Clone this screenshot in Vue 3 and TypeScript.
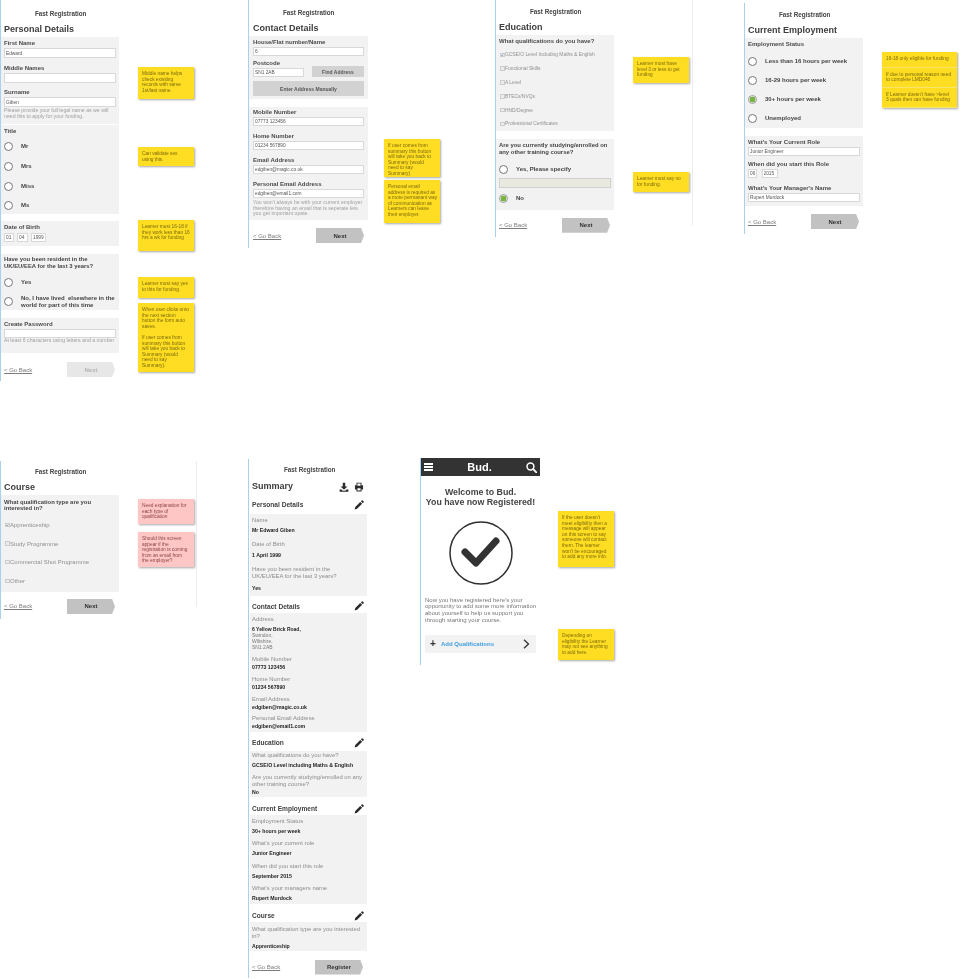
<script setup lang="ts">
type Row = {
  k: string
  h: number
  text?: string
  pt?: number
  on?: boolean
  values?: { v: string; w: number; gap?: number }[]
  btn?: string
}
type Panel = { mt: number; rows: Row[] }
type Frame = {
  name: string
  left: number
  top: number
  height: number
  width: number
  pad: number
  inset: number
  p: number
  mb: number
  title: string
  panels: Panel[]
  footMt: number
  next: string
  disabled?: boolean
  rightLine?: number
  icons?: boolean
}

const L = (text: string, h: number): Row => ({ k: 'label', text, h })
const I = (v: string, h = 9): Row => ({ k: 'inputs', h, values: [{ v, w: 0 }] })
const G = (h: number): Row => ({ k: 'gap', h })
const A = (text: string, h: number, pt = 0): Row => ({ k: 'ask', text, h, pt })
const H = (text: string, h: number, pt = 0): Row => ({ k: 'help', text, h, pt })
const R = (text: string, h: number, on = false): Row => ({ k: 'radio', text, h, on })
const C = (text: string, h: number, on = false): Row => ({ k: 'check', text, h, on })
const S = (text: string, h: number, pt = 0): Row => ({ k: 'sumlabel', text, h, pt })
const V = (text: string, h = 8, pt = 0): Row => ({ k: 'sumval', text, h, pt })
const T = (text: string, h: number, pt: number): Row => ({ k: 'sechead', text, h, pt })

const frames: Frame[] = [
  {
    name: 'personal', left: 0, top: 0, height: 381, width: 118, pad: 3, inset: 0, p: 9, mb: 3,
    title: 'Personal Details', footMt: 9, next: 'Next', disabled: true,
    panels: [
      { mt: 1, rows: [
        L('First Name', 11), I('Edward', 10), L('Middle Names', 15), I('', 10), L('Surname', 14), I('Giben', 10),
        H('Please provide your full legal name as we will\nneed this to apply for your funding.', 17, 1),
      ] },
      { mt: 1, rows: [L('Title', 11), R('Mr', 20), R('Mrs', 20), R('Miss', 20), R('Ms', 18)] },
      { mt: 7, rows: [
        L('Date of Birth', 11),
        { k: 'inputs', h: 14, pt: 1, values: [{ v: '01', w: 10, gap: 3 }, { v: '04', w: 11, gap: 3 }, { v: '1999', w: 15 }] },
      ] },
      { mt: 8, rows: [
        A('Have you been resident in the\nUK/EU/EEA for the last 3 years?', 17, 2),
        R('Yes', 22),
        R('No, I have lived  elsewhere in the\nworld for part of this time', 17),
      ] },
      { mt: 8, rows: [L('Create Password', 10.5), I('', 9.5), H('At least 6 characters using letters and a number', 15)] },
    ],
  },
  {
    name: 'contact', left: 248, top: 0, height: 248, width: 119, pad: 4, inset: 0, p: 7.5, mb: 3.5,
    title: 'Contact Details', footMt: 8, next: 'Next',
    panels: [
      { mt: 1, rows: [
        L('House/Flat number/Name', 11), I('6'),
        { k: 'postcode', h: 21, text: 'SN1 2AB', btn: 'Find Address' },
        { k: 'wide', h: 19, pt: 4, btn: 'Enter Address Manually' },
        G(3),
      ] },
      { mt: 8, rows: [
        L('Mobile Number', 10), I('07773 123456'), L('Home Number', 15), I('01234 567890'),
        L('Email Address', 15), I('edgiben@magic.co.uk'), L('Personal Email Address', 15), I('edgiben@email1.com'),
        H("You won't always be with your current employer\ntherefore having an email that is seperate lets\nyou get important upate.", 22, 2),
      ] },
    ],
  },
  {
    name: 'education', left: 495, top: 0, height: 237, width: 118, pad: 3, inset: 0, p: 7, mb: 3,
    title: 'Education', footMt: 8, next: 'Next', rightLine: 196,
    panels: [
      { mt: 1, rows: [
        L('What qualifications do you have?', 11), G(2),
        C('GCSE/O Level Including Maths & English', 13.8, true), C('Functional Skills', 13.8), C('A Level', 13.8),
        C('BTECs/NVQs', 13.8), C('HND/Degree', 13.8), C('Professional Certificates', 13.8),
      ] },
      { mt: 8, rows: [
        A('Are you currently studying/enrolled on\nany other training course?', 18, 3.5),
        G(5), R('Yes, Please specify', 16), { k: 'field', h: 10 }, R('No', 22, true),
      ] },
    ],
  },
  {
    name: 'employment', left: 744, top: 3, height: 231, width: 118, pad: 3, inset: 0, p: 7, mb: 3,
    title: 'Current Employment', footMt: 8, next: 'Next',
    panels: [
      { mt: 1, rows: [
        L('Employment Status', 11), G(2.5),
        R('Less than 16 hours per week', 19), R('16-29 hours per week', 19),
        R('30+ hours per week', 19, true), R('Unemployed', 19),
      ] },
      { mt: 8, rows: [
        L("What's Your Current Role", 11.5), I('Junior Engineer'), L('When did you start this Role', 13),
        { k: 'inputs', h: 8, values: [{ v: '09', w: 9, gap: 4.5 }, { v: '2015', w: 16 }] },
        L("What's Your Manager's Name", 16), I('Rupert Murdock'), G(4),
      ] },
    ],
  },
  {
    name: 'course', left: 0, top: 461, height: 158, width: 118, pad: 3, inset: 0, p: 5.5, mb: 3.5,
    title: 'Course', footMt: 7, next: 'Next', rightLine: 195,
    panels: [
      { mt: 1, rows: [
        A('What qualification type are you\ninterested in?', 19, 3.5), G(1.5),
        { ...C('Apprenticeship', 18.7, true), k: 'bigcheck' }, { ...C('Study Programme', 18.7), k: 'bigcheck' },
        { ...C('Commercial Shot Programme', 18.7), k: 'bigcheck' }, { ...C('Other', 18.7), k: 'bigcheck' }, G(1.7),
      ] },
    ],
  },
  {
    name: 'summary', left: 248, top: 459, height: 519, width: 117, pad: 2, inset: 1, p: 6, mb: 4,
    title: 'Summary', footMt: 9, next: 'Register', icons: true,
    panels: [
      { mt: 0, rows: [T('Personal Details', 21, 2)] },
      { mt: 0, rows: [
        S('Name', 12), V('Mr Edward Giben'), G(4), S('Date of Birth', 13), V('1 April 1999'), G(5),
        S('Have you been resident in the\nUK/EU/EEA for the last 3 years?', 16, 1.5), G(4), V('Yes'), G(4),
      ] },
      { mt: 0, rows: [T('Contact Details', 17, 3)] },
      { mt: 0, rows: [
        S('Address', 13),
        { k: 'address', h: 24 },
        G(5.5), S('Mobile Number', 7), V('07773 123456'), G(5.5), S('Home Number', 7), V('01234 567890'),
        G(5), S('Email Address', 7), V('edgiben@magic.co.uk'), G(4), S('Personal Email Address', 7), V('edgiben@email1.com'), G(1.5),
      ] },
      { mt: 0, rows: [T('Education', 19, 3)] },
      { mt: 0, rows: [
        S('What qualifications do you have?', 10), V('GCSE/O Level including Maths & English'), G(5.5),
        S('Are you currently studying/enrolled on any\nother training course?', 14), V('No'), G(0.5),
      ] },
      { mt: 0, rows: [T('Current Employment', 18, 6)] },
      { mt: 0, rows: [
        S('Employment Status', 13), V('30+ hours per week', 6), G(6.5), S("What's your current role", 7), G(3), V('Junior Engineer', 6),
        G(7), S('When did you start this role', 7), G(3), V('September 2015', 6),
        G(6), S("What's your managers name", 7), G(3), V('Rupert Murdock', 6), G(2.5),
      ] },
      { mt: 0, rows: [T('Course', 18, 6)] },
      { mt: 0, rows: [
        S('What qualification type are you interested\nin?', 18, 5.7), G(2), V('Apprenticeship'), G(1),
      ] },
    ],
  },
]

type Note = { x: number; y: number; w: number; h: number; text: string[]; pink?: boolean; split?: boolean }
const notes: Note[] = [
  { x: 138, y: 67, w: 56, h: 32, text: ['Middle name helps\ncheck exisiting\nrecords with same\n1st/last name.'] },
  { x: 138, y: 147, w: 56, h: 19, text: ['Can validate sex\nusing this.'] },
  { x: 138, y: 220, w: 56, h: 31, text: ['Learner must 16-18 if\nthey work less than 16\nhrs a wk for funding'] },
  { x: 138, y: 277, w: 56, h: 21, text: ['Learner must say yes\nto this for funding.'] },
  { x: 138, y: 303, w: 56, h: 69, text: ['When user clicks onto\nthe next section\nbutton the form auto\nsaves.\n\nIf user comes from\nsummary this button\nwill take you back to\nSummary (would\nneed to say\nSummary).'] },
  { x: 384, y: 139, w: 56, h: 38, text: ['If user comes from\nsummary this button\nwill take you back to\nSummary (would\nneed to say\nSummary)'] },
  { x: 384, y: 180, w: 56, h: 43, text: ['Personal email\naddress is required as\na more permanant way\nof communication as\nLearners can leave\ntheir employer.'] },
  { x: 633, y: 57, w: 56, h: 26, text: ['Learner must have\nlevel 3 or less to get\nfunding'] },
  { x: 633, y: 172, w: 56, h: 20, text: ['Learner must say no\nfor funding.'] },
  { x: 882, y: 52, w: 75, h: 56, split: true, text: ['16-18 only eligible for funding', 'If due to personal reason need\nto complete LMD046', "If Learner doesn't have >level\n3 quals then can have funding"] },
  { x: 138, y: 499, w: 56, h: 25, pink: true, text: ['Need explanation for\neach type of\nqualification'] },
  { x: 138, y: 532, w: 56, h: 35, pink: true, text: ['Should this screen\nappear if the\nregistration is coming\nfrom an email from\nthe employer?'] },
  { x: 558, y: 511, w: 56, h: 56, text: ["If the user doesn't\nmeet eligibility then a\nmessage will appear\non this screen to say\nsomeone will contact\nthem. The learner\nwon't be encouraged\nto add any more info."] },
  { x: 558, y: 629, w: 56, h: 31, text: ['Depending on\neligibility the Learner\nmay not see anything\nto add here.'] },
]
const pencil = 'M1 15 L2 11 L10 3 L13 6 L5 14 Z M11 2 L12.5 .6 Q13.2 0 14 .7 L15.3 2 Q16 2.8 15.4 3.5 L14 5 Z'
</script>

<template>
  <main class="canvas">
    <section
      v-for="f in frames"
      :key="f.name"
      class="frame"
      :style="{ left: f.left + 'px', top: f.top + 'px', height: f.height + 'px', paddingTop: f.p + 'px' }"
    >
      <span v-if="f.rightLine" class="right-line" :style="{ left: f.rightLine + 'px' }"></span>
      <div class="stack" :style="{ width: f.width + 'px', marginLeft: f.inset + 'px' }">
        <div class="brand" :style="{ marginBottom: f.mb + 'px' }">Fast Registration</div>
        <h2 class="title" :style="{ paddingLeft: f.pad + 'px' }">
          <span>{{ f.title }}</span>
          <span v-if="f.icons" class="tools">
            <svg width="10" height="10" viewBox="0 0 16 16">
              <path d="M6 1h4v6h3.5L8 12.5 2.5 7H6z M1 12h3l2 2h4l2-2h3v3.5H1z" fill="#2b2b2b" />
            </svg>
            <svg width="10" height="10" viewBox="0 0 16 16">
              <path d="M4 1h8v4h2.5v7H12v3H4v-3H1.5V5H4z M5.5 2.5V6h5V2.5z M5.5 10v3.500h5V10z" fill="#2b2b2b" fill-rule="evenodd" />
            </svg>
          </span>
        </h2>
        <div
          v-for="(panel, pi) in f.panels"
          :key="pi"
          :class="panel.rows[0].k === 'sechead' ? 'plain' : 'panel'"
          :style="{ marginTop: panel.mt + 'px', paddingLeft: f.pad + 'px', paddingRight: f.pad + 'px' }"
        >
          <div
            v-for="(row, ri) in panel.rows"
            :key="ri"
            :class="['row', 'row-' + row.k]"
            :style="{ height: row.h + 'px', paddingTop: (row.pt ?? 0) + 'px' }"
          >
            <template v-if="row.k === 'radio'">
              <span class="radio" :class="{ on: row.on }"></span>
              <span class="radio-text">{{ row.text }}</span>
            </template>
            <template v-else-if="row.k === 'check' || row.k === 'bigcheck'">
              <span class="check" :class="{ on: row.on }">
                <svg v-if="row.on" viewBox="0 0 10 10"><path d="M1.500 5.500 4 8 8.500 2" fill="none" stroke="#2d5f96" stroke-width="2" /></svg>
              </span>
              <span>{{ row.text }}</span>
            </template>
            <template v-else-if="row.k === 'inputs'">
              <input
                v-for="(item, ii) in row.values"
                :key="ii"
                class="field"
                :class="{ grow: !item.w }"
                readonly
                :value="item.v"
                :style="item.w ? { width: item.w + 'px', marginRight: (item.gap ?? 0) + 'px' } : undefined"
              />
            </template>
            <template v-else-if="row.k === 'postcode'">
              <div class="post-left">
                <div class="row-label post-label">Postcode</div>
                <input class="field post-input" readonly :value="row.text" />
              </div>
              <button class="grey-btn find" type="button">{{ row.btn }}</button>
            </template>
            <button v-else-if="row.k === 'wide'" class="grey-btn wide" type="button">{{ row.btn }}</button>
            <div v-else-if="row.k === 'field'" class="specify"></div>
            <template v-else-if="row.k === 'address'">
              <b>6 Yellow Brick Road,</b>
              <span>Swindon,</span>
              <span>Wiltshire,</span>
              <span>SN1 2AB</span>
            </template>
            <template v-else-if="row.k === 'sechead'">
              <span>{{ row.text }}</span>
              <svg class="pencil" width="10" height="10" viewBox="0 0 16 16"><path :d="pencil" fill="#2b2b2b" /></svg>
            </template>
            <span v-else-if="row.k !== 'gap'">{{ row.text }}</span>
          </div>
        </div>
        <div class="footer" :style="{ marginTop: f.footMt + 'px', paddingLeft: f.pad + 'px' }">
          <a class="back">&lt; Go Back</a>
          <button class="next" :class="{ disabled: f.disabled }" type="button">{{ f.next }}</button>
        </div>
      </div>
    </section>

    <section class="frame welcome">
      <header class="bud-bar">
        <span class="burger"><i></i><i></i><i></i></span>
        <strong>Bud.</strong>
        <svg width="11" height="11" viewBox="0 0 16 16">
          <circle cx="6.500" cy="6.500" r="5" fill="none" stroke="#fff" stroke-width="2.200" />
          <path d="M10.500 10.500 15 15" stroke="#fff" stroke-width="2.600" stroke-linecap="round" />
        </svg>
      </header>
      <h1 class="welcome-title">Welcome to Bud.<br />You have now Registered!</h1>
      <svg class="tick" width="64" height="64" viewBox="0 0 64 64">
        <circle cx="32" cy="32" r="31" fill="#fff" stroke="#2f2f2f" stroke-width="1.500" />
        <path d="M16 31 L27 42 L47 20" fill="none" stroke="#333" stroke-width="7" stroke-linecap="round" stroke-linejoin="round" />
      </svg>
      <p class="welcome-text">Now you have registered here's your<br />opportunity to add some more information<br />about yourself to help us support you<br />through starting your course.</p>
      <div class="add-bar">
        <span class="plus">+</span>
        <span class="add-text">Add Qualifications</span>
        <svg width="7" height="10" viewBox="0 0 7 10"><path d="M1 .8 5.500 5 1 9.200" fill="none" stroke="#333" stroke-width="1.300" /></svg>
      </div>
    </section>

    <aside
      v-for="(n, i) in notes"
      :key="i"
      class="note"
      :class="{ pink: n.pink, split: n.split }"
      :style="{ left: n.x + 'px', top: n.y + 'px', width: n.w + 'px', height: n.h + 'px' }"
    >
      <p v-for="(t, ti) in n.text" :key="ti">{{ t }}</p>
    </aside>
  </main>
</template>

<style scoped>
.canvas {
  position: relative;
  width: 960px;
  height: 979px;
  overflow: hidden;
  background: #fff;
  color: #444;
  font-family: "Liberation Sans", Arial, sans-serif;
  filter: blur(0.35px);
}
.frame {
  position: absolute;
  box-sizing: border-box;
  border-left: 1px solid #a9d0ef;
}
.right-line {
  position: absolute;
  top: 0;
  bottom: 12px;
  width: 1px;
  background: #ececf2;
}
.brand {
  height: 10px;
  line-height: 10px;
  padding-left: 34px;
  font-size: 6.3px;
  font-weight: 700;
  color: #444;
}
.title {
  display: flex;
  justify-content: space-between;
  align-items: center;
  height: 14px;
  margin: 0;
  font-size: 9px;
  line-height: 14px;
  font-weight: 700;
  color: #3d3d3d;
}
.tools {
  display: flex;
  gap: 5px;
  padding-right: 3px;
  padding-top: 1px;
}
.panel {
  background-color: #f2f2f2;
  background-image: radial-gradient(circle, #f8f8f8 0.5px, transparent 0.6px);
  background-size: 2px 2px;
}
.row {
  box-sizing: border-box;
  display: flex;
  align-items: center;
  white-space: pre;
}
.row-label {
  align-items: flex-end;
  font-size: 6px;
  font-weight: 700;
  line-height: 10px;
  color: #4a4a4a;
}
.row-inputs {
  align-items: flex-start;
}
.row-ask {
  align-items: flex-start;
  font-size: 5.900px;
  font-weight: 700;
  line-height: 6.800px;
  color: #444;
}
.row-help {
  align-items: flex-start;
  font-size: 5.200px;
  line-height: 5.700px;
  color: #a0a0a0;
}
.row-radio {
  font-size: 6px;
  line-height: 6.800px;
  font-weight: 700;
  color: #444;
}
.radio {
  flex: none;
  box-sizing: border-box;
  width: 9px;
  height: 9px;
  margin: 0 8px 0 0;
  border: 0.700px solid #777;
  border-radius: 50%;
  background: #fff;
}
.radio.on {
  border-color: #999;
  background: radial-gradient(circle, #79b342 0 2.800px, #fff 3.200px);
}
.row-check {
  font-size: 4.900px;
  color: #8f8f8f;
}
.row-bigcheck {
  font-size: 6px;
  color: #8f8f8f;
}
.check {
  flex: none;
  box-sizing: border-box;
  display: block;
  width: 4.500px;
  height: 4.500px;
  margin: 0 0.500px 0 1px;
  border: 0.400px solid #ccc;
  background: #ececec;
}
.check svg {
  display: block;
  width: 100%;
  height: 100%;
}
.field {
  box-sizing: border-box;
  display: block;
  height: 9px;
  min-width: 0;
  margin: 0;
  padding: 0 1px;
  border: 0.500px solid #d8d8d8;
  border-radius: 0;
  outline: none;
  background: #fff;
  color: #555;
  font-family: inherit;
  font-size: 4.800px;
}
.field.grow {
  flex: 1;
  height: 100%;
}
.row-postcode {
  justify-content: space-between;
  align-items: flex-end;
}
.post-left {
  width: 51px;
}
.post-label {
  display: flex;
  height: 12px;
}
.post-input {
  width: 51px;
}
.grey-btn {
  box-sizing: border-box;
  padding: 0;
  border: 0;
  background: #d2d2d2;
  color: #555;
  font-family: inherit;
  font-size: 5px;
  font-weight: 700;
}
.find {
  width: 52px;
  height: 11px;
}
.row-wide {
  align-items: flex-start;
}
.wide {
  width: 100%;
  height: 15px;
}
.specify {
  width: 100%;
  height: 100%;
  box-sizing: border-box;
  border: 0.500px solid #d0d0d0;
  background: #e9e9e0;
}
.row-sechead {
  justify-content: space-between;
  font-size: 6.600px;
  font-weight: 700;
  color: #3f3f3f;
}
.pencil {
  margin-right: 1px;
}
.row-sumlabel {
  font-size: 5.900px;
  line-height: 7px;
  color: #8c8c8c;
}
.row-sumval {
  font-size: 5.200px;
  font-weight: 700;
  color: #222;
}
.row-address {
  flex-direction: column;
  align-items: flex-start;
  font-size: 5px;
  line-height: 6px;
  color: #777;
}
.row-address b {
  color: #222;
}
.footer {
  display: flex;
  justify-content: space-between;
  align-items: center;
  box-sizing: border-box;
  height: 15px;
  padding-right: 4px;
}
.back {
  font-size: 6px;
  color: #7d7d7d;
  text-decoration: underline;
}
.next {
  width: 48px;
  height: 15px;
  padding: 0;
  border: 0;
  background: #c2c2c2;
  color: #333;
  font-family: inherit;
  font-size: 6px;
  font-weight: 700;
  clip-path: polygon(0 0, 94% 0, 100% 50%, 94% 100%, 0 100%);
}
.next.disabled {
  background: #e7e7e7;
  color: #b4b4b4;
}
.welcome {
  left: 420px;
  top: 458px;
  width: 120px;
  height: 207px;
}
.bud-bar {
  display: flex;
  align-items: center;
  justify-content: space-between;
  height: 18px;
  padding: 0 3px;
  box-sizing: border-box;
  background: #333;
  color: #fff;
}
.bud-bar strong {
  font-size: 11px;
}
.burger {
  display: flex;
  flex-direction: column;
  gap: 1.500px;
  width: 9px;
}
.burger i {
  display: block;
  height: 1.500px;
  background: #fff;
}
.welcome-title {
  margin: 11px 0 14px;
  font-size: 8.800px;
  line-height: 10px;
  font-weight: 700;
  text-align: center;
  color: #444;
}
.tick {
  display: block;
  margin: 0 auto;
}
.welcome-text {
  margin: 11.500px 0 0 4px;
  font-size: 6px;
  line-height: 6.800px;
  color: #777;
  white-space: nowrap;
}
.add-bar {
  display: flex;
  align-items: center;
  box-sizing: border-box;
  width: 111px;
  height: 18px;
  margin: 11px 0 0 4px;
  padding: 0 6px 0 5px;
  background: #f2f2f2;
}
.plus {
  width: 11px;
  font-size: 10px;
  font-weight: 700;
  color: #333;
}
.add-text {
  flex: 1;
  font-size: 6px;
  font-weight: 700;
  color: #3f9fe0;
}
.note {
  position: absolute;
  box-sizing: border-box;
  padding: 4px;
  background: #ffdd22;
  color: #7c6b0c;
  font-size: 4.800px;
  line-height: 5.600px;
  box-shadow: 1px 1px 2px rgba(0, 0, 0, 0.35);
  white-space: pre;
}
.note p {
  margin: 0;
}
.note.pink {
  background: #ffc6c6;
  color: #8a4444;
}
.note.split {
  display: flex;
  flex-direction: column;
  padding: 0;
}
.note.split p {
  flex: 1;
  box-sizing: border-box;
  padding: 4px;
  border-bottom: 0.500px solid #f7e56e;
}
</style>
